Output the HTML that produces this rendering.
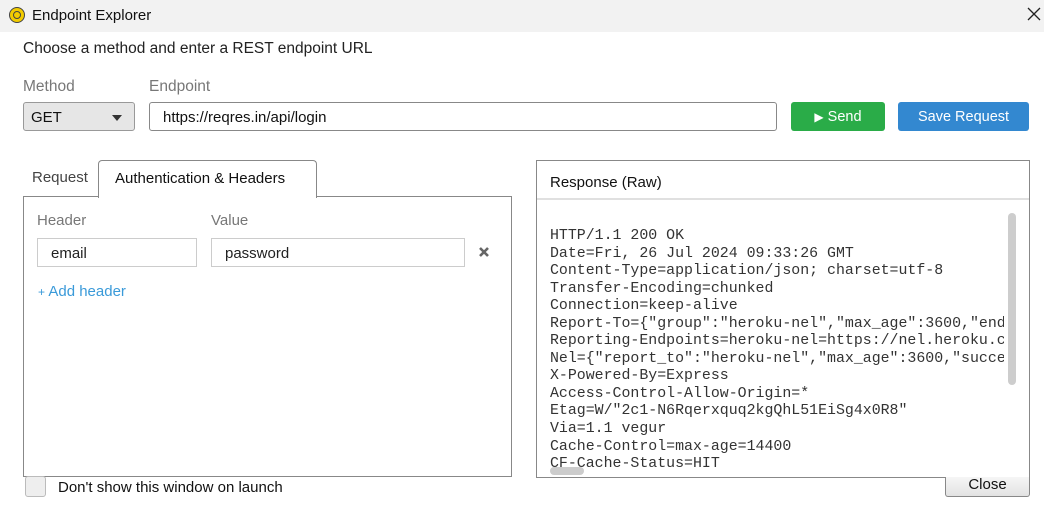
<!DOCTYPE html>
<html><head><meta charset="utf-8"><style>
*{box-sizing:border-box;margin:0;padding:0}
body{width:1044px;height:514px;background:#fff;position:relative;overflow:hidden;font-family:"Liberation Sans",sans-serif;color:#222}
.a{position:absolute;white-space:nowrap}
.inp{position:absolute;border:1px solid #aaa;background:#fff;font-size:15px;padding-left:13px;padding-top:2px;display:flex;align-items:center}
pre{font-family:"Liberation Mono",monospace;font-size:14.9px;line-height:17.55px;color:#333}
</style></head><body>
<div class="a" style="left:0;top:0;width:1044px;height:32px;background:#f2f2f2"></div>
<div class="a" style="left:9px;top:7px;width:16px;height:16px;border-radius:50%;background:#f2cc00;border:1.5px solid #444"></div>
<div class="a" style="left:13px;top:11px;width:8px;height:8px;border-radius:50%;border:1px solid #444"></div>
<div class="a" style="left:32px;top:7px;font-size:15px;color:#111">Endpoint Explorer</div>
<svg class="a" style="left:1027px;top:7px" width="14" height="14"><path d="M1 1L13 13M13 1L1 13" stroke="#222" stroke-width="1.3"/></svg>
<div class="a" style="left:23px;top:40px;font-size:15.5px;color:#222">Choose a method and enter a REST endpoint URL</div>
<div class="a" style="left:23px;top:78px;font-size:15.5px;color:#777">Method</div>
<div class="a" style="left:149px;top:78px;font-size:15.5px;color:#777">Endpoint</div>
<div class="a" style="left:23px;top:102px;width:112px;height:29px;background:#e6e6e6;border:1px solid #999;border-radius:3px"></div>
<div class="a" style="left:31px;top:109px;font-size:15px;color:#111">GET</div>
<svg class="a" style="left:112px;top:115px" width="10" height="6"><path d="M0 0H10L5 6Z" fill="#333"/></svg>
<div class="inp" style="left:149px;top:102px;width:628px;height:29px;border-color:#888;border-radius:3px;color:#111">https://reqres.in/api/login</div>
<div class="a" style="left:791px;top:102px;width:94px;height:29px;background:#2aac48;border-radius:3px;color:#fff;font-size:14.5px;text-align:center;line-height:31px"><span style="font-size:12px">&#9654;</span> Send</div>
<div class="a" style="left:898px;top:102px;width:131px;height:29px;background:#3388d0;border-radius:3px;color:#fff;font-size:14.5px;text-align:center;line-height:31px">Save Request</div>
<div class="a" style="left:32px;top:169px;font-size:15px;color:#444">Request</div>
<div class="a" style="left:23px;top:196px;width:489px;height:281px;border:1px solid #888"></div>
<div class="a" style="left:98px;top:160px;width:219px;height:38px;border:1px solid #888;border-bottom:none;border-radius:4px 4px 0 0;background:#fff"></div>
<div class="a" style="left:115px;top:170px;font-size:15px;color:#111">Authentication &amp; Headers</div>
<div class="a" style="left:37px;top:212px;font-size:15px;color:#777">Header</div>
<div class="a" style="left:211px;top:212px;font-size:15px;color:#777">Value</div>
<div class="inp" style="left:37px;top:238px;width:160px;height:29px;border-color:#ccc">email</div>
<div class="inp" style="left:211px;top:238px;width:254px;height:29px;border-color:#ccc">password</div>
<svg class="a" style="left:478px;top:246px" width="12" height="12"><path d="M2 2L10 10M10 2L2 10" stroke="#666" stroke-width="2.6"/></svg>
<div class="a" style="left:38px;top:283px;font-size:15px;color:#3a9ad9"><span style="font-size:12px">+</span> Add header</div>
<div class="a" style="left:536px;top:160px;width:494px;height:318px;border:1px solid #888;overflow:hidden">
<div style="height:39px;border-bottom:2px solid #e0e0e0;font-size:15px;padding:13px 0 0 13px;color:#111">Response (Raw)</div>
<pre style="position:absolute;left:13px;top:67px">HTTP/1.1 200 OK
Date=Fri, 26 Jul 2024 09:33:26 GMT
Content-Type=application/json; charset=utf-8
Transfer-Encoding=chunked
Connection=keep-alive
Report-To={"group":"heroku-nel","max_age":3600,"end
Reporting-Endpoints=heroku-nel=https://nel.heroku.c
Nel={"report_to":"heroku-nel","max_age":3600,"succe
X-Powered-By=Express
Access-Control-Allow-Origin=*
Etag=W/"2c1-N6Rqerxquq2kgQhL51EiSg4x0R8"
Via=1.1 vegur
Cache-Control=max-age=14400
CF-Cache-Status=HIT</pre>
<div style="position:absolute;left:467px;top:41px;width:26px;height:276px;background:#fff"></div>
<div style="position:absolute;left:471px;top:52px;width:8px;height:172px;background:#cdcdcd;border-radius:4px"></div>
<div style="position:absolute;left:13px;top:306px;width:34px;height:8px;background:#ccc;border-radius:4px"></div>
</div>
<div class="a" style="left:945px;top:477px;width:85px;height:20px;border:1px solid #888;border-top:none;background:linear-gradient(#f6f6f6,#e2e2e2);border-radius:0 0 3px 3px;font-size:15px;text-align:center;line-height:16px;color:#111">Close</div>
<div class="a" style="left:25px;top:476px;width:21px;height:21px;border:1px solid #bbb;border-radius:3px;background:#eee"></div>
<div class="a" style="left:58px;top:479px;font-size:15px;color:#111">Don't show this window on launch</div>
</body></html>
